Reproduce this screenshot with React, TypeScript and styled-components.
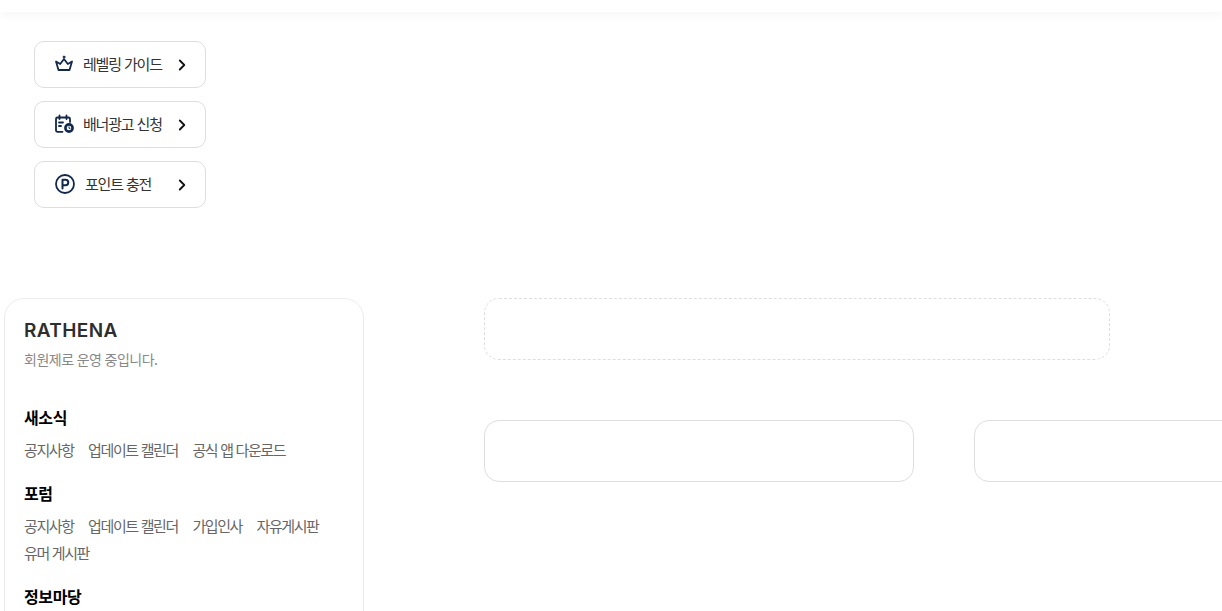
import React, { FC } from 'react';
import styled, { createGlobalStyle } from 'styled-components';

const GlobalStyle = createGlobalStyle`
   html, body {
      margin: 0;
      height: 611px;
      overflow: hidden;
      background: #fff;
      font-family: 'Noto Sans CJK KR', 'Noto Sans', sans-serif;
   }
`;

const navy = '#12284c';

const CrownIcon = () => (
   <svg width="20" height="20" viewBox="0 0 20 20" fill="none" stroke={navy} strokeWidth="1.8" strokeLinejoin="round" strokeLinecap="round">
      <path d="M2 7.500 6.200 10 10 5l3.800 5L18 7.500 15.500 16h-11z" />
      <circle cx="10" cy="3" r="1" fill={navy} strokeWidth="0.8" />
   </svg>
);

const CalendarIcon = () => (
   <svg width="20" height="20" viewBox="0 0 20 20" fill="none" stroke={navy} strokeWidth="1.8" strokeLinecap="round" strokeLinejoin="round">
      <path d="M8.500 17.800H3.500A1.500 1.500 0 0 1 2 16.300V5A1.500 1.500 0 0 1 3.500 3.500H14.500A1.500 1.500 0 0 1 16 5V8" />
      <path d="M5.500 1.500V5M12.500 1.500V5M5 8.500H9M5 12H7" />
      <circle cx="15" cy="14" r="3.600" fill="#fff" strokeWidth="2.600" />
      <path d="M15 12.800V14.300H16" strokeWidth="1" />
   </svg>
);

const PointIcon = () => (
   <svg width="22" height="22" viewBox="0 0 22 22" fill="none" stroke={navy} strokeWidth="1.8" strokeLinecap="round" strokeLinejoin="round">
      <circle cx="11" cy="11" r="9" />
      <path d="M8.500 15.500V6.800h3a2.700 2.700 0 0 1 0 5.500h-3" strokeWidth="2" />
   </svg>
);

const Chevron = () => (
   <svg width="8" height="12" viewBox="0 0 8 12" fill="none" stroke="#111" strokeWidth="1.800" strokeLinecap="round" strokeLinejoin="round">
      <path d="M1.800 1.500 6.300 6l-4.500 4.500" />
   </svg>
);

const quickLinks = [
   { label: '레벨링 가이드', icon: <CrownIcon />, gap: 9 },
   { label: '배너광고 신청', icon: <CalendarIcon />, gap: 9 },
   { label: '포인트 충전', icon: <PointIcon />, gap: 9 },
];

const menuGroups = [
   { title: '새소식', links: ['공지사항', '업데이트 캘린더', '공식 앱 다운로드'] },
   { title: '포럼', links: ['공지사항', '업데이트 캘린더', '가입인사', '자유게시판', '유머 게시판'] },
   { title: '정보마당', links: [] as string[] },
];

const App: FC = () => {
   return (
      <Page>
         <GlobalStyle />
         <TopBar />
         <QuickMenu>
            {quickLinks.map((item) => (
               <QuickButton key={item.label}>
                  <QuickLabel gap={item.gap}>
                     {item.icon}
                     <span>{item.label}</span>
                  </QuickLabel>
                  <Chevron />
               </QuickButton>
            ))}
         </QuickMenu>
         <Main>
            <Sidebar>
               <Brand>RATHENA</Brand>
               <Tagline>회원제로 운영 중입니다.</Tagline>
               {menuGroups.map((group) => (
                  <MenuGroup key={group.title}>
                     <GroupTitle>{group.title}</GroupTitle>
                     {group.links.length > 0 && (
                        <LinkList>
                           {group.links.map((link) => (
                              <MenuLink key={link}>{link}</MenuLink>
                           ))}
                        </LinkList>
                     )}
                  </MenuGroup>
               ))}
            </Sidebar>
            <Content>
               <DashedSlot />
               <SlotRow>
                  <Slot />
                  <Slot />
               </SlotRow>
            </Content>
         </Main>
      </Page>
   );
};

const Page = styled.div`
   width: 1222px;
   height: 611px;
   overflow: hidden;
`;

const TopBar = styled.header`
   height: 12px;
   background: #fff;
   box-shadow: 0 3px 10px rgba(0, 0, 0, 0.04);
`;

const QuickMenu = styled.nav`
   display: flex;
   flex-direction: column;
   gap: 13px;
   width: 172px;
   padding: 29px 0 0 34px;
`;

const QuickButton = styled.a`
   box-sizing: border-box;
   height: 47px;
   display: flex;
   align-items: center;
   justify-content: space-between;
   padding: 0 19px;
   border: 1px solid #dedede;
   border-radius: 10px;
   background: #fff;
`;

const QuickLabel = styled.span<{ gap: number }>`
   display: flex;
   align-items: center;
   gap: ${({ gap }) => gap}px;
   padding-bottom: 2px;
   font-size: 15px;
   line-height: 20px;
   letter-spacing: -1.2px;
   word-spacing: 1px;
   color: #333;
   white-space: nowrap;
`;

const Main = styled.main`
   display: flex;
   align-items: flex-start;
   gap: 120px;
   padding: 90px 0 0 4px;
`;

const Sidebar = styled.aside`
   box-sizing: border-box;
   flex: none;
   width: 360px;
   height: 400px;
   padding: 19px 19px 0;
   border: 1px solid #ececec;
   border-radius: 20px;
   background: #fff;
`;

const Brand = styled.h1`
   margin: 0;
   font-family: 'Inter', 'Noto Sans', sans-serif;
   font-size: 19px;
   line-height: 26px;
   font-weight: 600;
   letter-spacing: 0.4px;
   color: #2e2e2e;
`;

const Tagline = styled.p`
   margin: 5px 0 0;
   font-size: 14px;
   line-height: 20px;
   letter-spacing: -0.5px;
   word-spacing: 0.5px;
   color: #888;
`;

const MenuGroup = styled.section`
   margin-top: 22px;

   &:first-of-type {
      margin-top: 37px;
   }
`;

const GroupTitle = styled.h2`
   margin: 0;
   font-size: 16px;
   line-height: 22px;
   font-weight: 700;
   letter-spacing: -0.4px;
   color: #000;
`;

const LinkList = styled.div`
   display: flex;
   flex-wrap: wrap;
   gap: 7px 14.5px;
   margin-top: 12px;
`;

const MenuLink = styled.a`
   font-size: 15px;
   line-height: 20px;
   letter-spacing: -1.4px;
   word-spacing: 1px;
   color: #666;
   white-space: nowrap;
`;

const Content = styled.div`
   flex: none;
   display: flex;
   flex-direction: column;
   gap: 60px;
`;

const DashedSlot = styled.div`
   box-sizing: border-box;
   width: 626px;
   height: 62px;
   border: 1px dashed #dedede;
   border-radius: 15px;
`;

const SlotRow = styled.div`
   display: flex;
   gap: 60px;
`;

const Slot = styled.div`
   box-sizing: border-box;
   flex: none;
   width: 430px;
   height: 62px;
   border: 1px solid #dedede;
   border-radius: 15px;
`;

export default App;
